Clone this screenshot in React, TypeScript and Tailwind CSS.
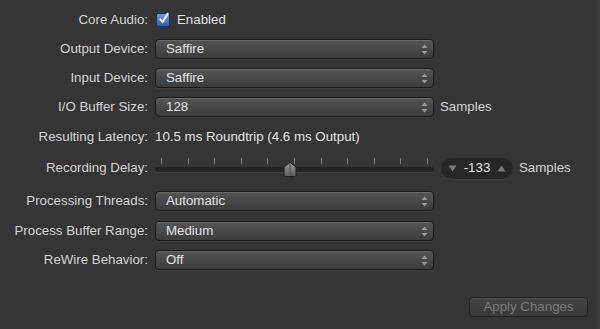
import React from 'react';

const font = { fontFamily: '"Liberation Sans", Arial, sans-serif' };

function Label({ children }: { children: React.ReactNode }) {
  return <div className="w-[149px] shrink-0 pr-[1px] text-right text-[13.3px] text-[#d4d4d4]">{children}</div>;
}

function Popup({ value }: { value: string }) {
  return (
    <div className="relative flex h-[20px] w-[279px] items-center rounded-[4px] border border-[#1a1a1a] bg-gradient-to-b from-[#555555] to-[#3c3c3c] pl-[10px] text-[13.3px] text-[#e2e2e2] shadow-[inset_0_1px_0_rgba(255,255,255,0.12),0_1px_0_rgba(255,255,255,0.06)]">
      {value}
      <svg className="absolute right-[5px] top-[4px]" width="7" height="11" viewBox="0 0 7 11">
        <path d="M3.5 0.5 L6.5 4 L0.5 4 Z" fill="#9a9a9a" />
        <path d="M3.5 10.5 L6.5 7 L0.5 7 Z" fill="#9a9a9a" />
      </svg>
    </div>
  );
}

function Row({ label, children, className }: { label: string; children: React.ReactNode; className: string }) {
  return (
    <div className={`flex items-center gap-[6px] ${className}`}>
      <Label>{label}</Label>
      {children}
    </div>
  );
}

function Slider() {
  const ticks = Array.from({ length: 11 }, (_, i) => i);
  return (
    <div className="relative h-[22px] w-[279px]">
      {ticks.map((i) => (
        <div
          key={i}
          className="absolute top-[1px] h-[6px] w-[1px] bg-[#7a7a7a]"
          style={{ left: 6 + i * 26.6 }}
        />
      ))}
      <div className="absolute left-0 right-0 top-[10px] h-[5px] rounded-full bg-[#242424] shadow-[0_1px_0_rgba(255,255,255,0.06)]" />
      <svg className="absolute left-[128px] top-[5px]" width="14" height="15" viewBox="0 0 14 15">
        <defs>
          <linearGradient id="th" x1="0" y1="0" x2="0" y2="1">
            <stop offset="0" stopColor="#9a9a9a" />
            <stop offset="1" stopColor="#5a5a5a" />
          </linearGradient>
        </defs>
        <path d="M7 0.5 L13 5 L13 13 Q13 14.5 11.5 14.5 L2.5 14.5 Q1 14.5 1 13 L1 5 Z" fill="url(#th)" stroke="#1e1e1e" strokeWidth="1" />
        <line x1="7" y1="2" x2="7" y2="13" stroke="#4a4a4a" strokeWidth="1" />
      </svg>
    </div>
  );
}

export default function App() {
  return (
    <div className="h-[329px] w-[600px] overflow-hidden bg-[#353535] border-r-[3px] border-[#3c3c3c]" style={font}>
      <div className="flex flex-col pt-[10px]">
        {/* Core Audio */}
        <Row label="Core Audio:" className="h-[20px]">
          <div className="flex items-center gap-[7px] pl-[1px]">
            <div className="flex h-[14px] w-[14px] items-center justify-center rounded-[2px] border border-[#1d2f4a] bg-gradient-to-b from-[#6e9be0] to-[#2c5fb3]">
              <svg width="12" height="13" viewBox="0 0 12 13" className="-mt-[4px] ml-[1px]">
                <path d="M2 7 L5 10.5 L11 0.5" fill="none" stroke="#ffffff" strokeWidth="2" strokeLinejoin="round" />
              </svg>
            </div>
            <span className="text-[13.3px] text-[#e2e2e2]">Enabled</span>
          </div>
        </Row>

        <Row label="Output Device:" className="mt-[9px] h-[20px]">
          <Popup value="Saffire" />
        </Row>
        <Row label="Input Device:" className="mt-[9px] h-[20px]">
          <Popup value="Saffire" />
        </Row>
        <Row label="I/O Buffer Size:" className="mt-[9px] h-[20px]">
          <Popup value="128" />
          <span className="text-[13.3px] text-[#d4d4d4]">Samples</span>
        </Row>

        <Row label="Resulting Latency:" className="mt-[10px] h-[20px]">
          <span className="text-[13.3px] text-[#e2e2e2]">10.5 ms Roundtrip (4.6 ms Output)</span>
        </Row>

        <Row label="Recording Delay:" className="mt-[10px] h-[22px]">
          <Slider />
          <div className="ml-[1px] flex h-[21px] w-[72px] items-center justify-between rounded-full bg-[#262626] px-[7px] shadow-[0_1px_0_rgba(255,255,255,0.06)]">
            <svg width="9" height="7" viewBox="0 0 9 7">
              <path d="M0.5 0.5 L8.5 0.5 L4.5 6.5 Z" fill="#7c7c7c" />
            </svg>
            <span className="text-[13.3px] text-[#e2e2e2]">-133</span>
            <svg width="9" height="7" viewBox="0 0 9 7">
              <path d="M0.5 6.5 L8.5 6.5 L4.5 0.5 Z" fill="#7c7c7c" />
            </svg>
          </div>
          <span className="text-[13.3px] text-[#d4d4d4]">Samples</span>
        </Row>

        <Row label="Processing Threads:" className="mt-[12px] h-[20px]">
          <Popup value="Automatic" />
        </Row>
        <Row label="Process Buffer Range:" className="mt-[10px] h-[20px]">
          <Popup value="Medium" />
        </Row>
        <Row label="ReWire Behavior:" className="mt-[9px] h-[20px]">
          <Popup value="Off" />
        </Row>

        <div className="mt-[27px] flex justify-end pr-[9px]">
          <button className="flex h-[20px] w-[119px] items-center justify-center rounded-[4px] border border-[#232323] bg-gradient-to-b from-[#444444] to-[#393939] text-[13.3px] text-[#7b7b7b] shadow-[inset_0_1px_0_rgba(255,255,255,0.06)]">
            Apply Changes
          </button>
        </div>
      </div>
    </div>
  );
}
